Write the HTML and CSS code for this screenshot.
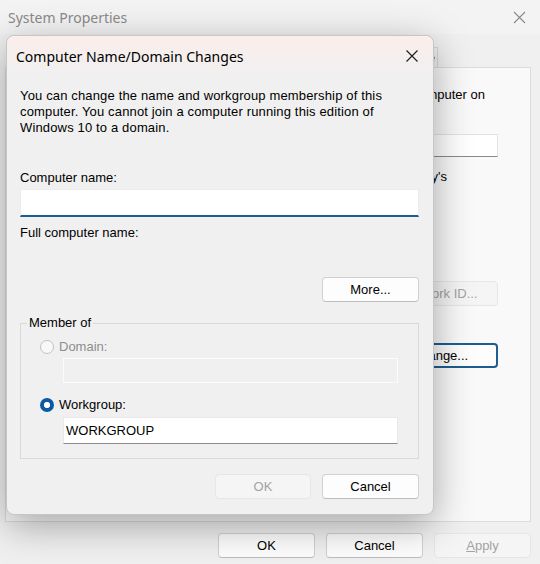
FILE: index.html
```html
<!DOCTYPE html>
<html lang="en">
<head>
    <meta charset="UTF-8">
    <title>System Properties</title>
    <link rel="stylesheet" href="styles.css">
</head>
<body>
    <div class="window">
        <div class="titlebar">
            <span class="title">System Properties</span>
            <svg class="close" width="13" height="13" viewBox="0 0 13 13"><path d="M1 1L12 12M12 1L1 12" stroke="#8a8a8a" stroke-width="1.1" fill="none"/></svg>
        </div>
        <div class="tabs">
            <div class="tab">Remote</div>
        </div>
        <div class="panel">
            <div class="bg-line right" style="margin-right: 13px;">computer on</div>
            <div class="bg-field"></div>
            <div class="bg-line right" style="margin-right: 51px; margin-top: 12px;">Mary's</div>
            <button class="btn wide disabled" style="margin-top: 96px;">Network ID...</button>
            <button class="btn wide focused" style="margin-top: 37px;">Change...</button>
        </div>
        <div class="footer">
            <button class="btn">OK</button>
            <button class="btn">Cancel</button>
            <button class="btn disabled"><u>A</u>pply</button>
        </div>
    </div>

    <div class="dialog">
        <div class="dialog-title">
            <span class="dialog-caption">Computer Name/Domain Changes</span>
            <svg width="12" height="12" viewBox="0 0 12 12"><path d="M0.5 0.5L11.5 11.5M11.5 0.5L0.5 11.5" stroke="#1a1a1a" stroke-width="1.1" fill="none"/></svg>
        </div>
        <div class="dialog-body">
            <p class="note">You can change the name and workgroup membership of this computer. You cannot join a computer running this edition of Windows 10 to a domain.</p>
            <div class="label first">Computer name:</div>
            <div class="field active"></div>
            <div class="label small-gap">Full computer name:</div>
            <button class="btn more">More...</button>

            <fieldset class="group">
                <legend>Member of</legend>
                <div class="radio-row disabled"><span class="radio"></span>Domain:</div>
                <div class="field sub disabled-field"></div>
                <div class="radio-row second"><span class="radio checked"></span>Workgroup:</div>
                <div class="field sub plain">WORKGROUP</div>
            </fieldset>

            <div class="actions">
                <button class="btn ok disabled">OK</button>
                <button class="btn">Cancel</button>
            </div>
        </div>
    </div>
</body>
</html>
```

FILE: styles.css
```css
body {
    margin: 0;
    font-family: "Liberation Sans", Arial, sans-serif;
    font-size: 13px;
    color: #000;
    background: #f0f0f0;
}
.window {
    width: 540px;
    height: 564px;
    background: #f0f0f0;
    display: flex;
    flex-direction: column;
    overflow: hidden;
}
.titlebar {
    height: 34px;
    display: flex;
    align-items: center;
    justify-content: space-between;
    padding: 0 14px 0 8px;
    background: #f3f3f3;
}
.title {
    font-family: "Noto Sans", sans-serif;
    font-size: 14px;
    color: #8a8a8a;
}
.tabs {
    display: flex;
    justify-content: flex-end;
    margin: 13px 102px 0 5px;
    height: 20px;
}
.tab {
    padding: 0 2px 0 6px;
    line-height: 19px;
    border: 1px solid #d9d9d9;
    border-bottom: none;
    background: #f0f0f0;
}
.panel {
    margin: 0 9px 0 5px;
    height: 455px;
    box-sizing: border-box;
    border: 1px solid #dcdcdc;
    background: #f9f9f9;
    padding: 19px 32px 0 16px;
    display: flex;
    flex-direction: column;
}
.bg-line {
    line-height: 16px;
    white-space: nowrap;
}
.bg-line.right {
    text-align: right;
}
.bg-field {
    margin: 31px 0 0 110px;
    height: 23px;
    box-sizing: border-box;
    background: #fff;
    border: 1px solid #e3e3e3;
    border-bottom-color: #8a8a8a;
}
.footer {
    display: flex;
    justify-content: flex-end;
    gap: 11px;
    padding: 11px 9px 0 0;
}
.btn {
    font-family: "Liberation Sans", Arial, sans-serif;
    font-size: 13px;
    color: #000;
    width: 97px;
    height: 25px;
    box-sizing: border-box;
    background: #fdfdfd;
    border: 1px solid #d0d0d0;
    border-bottom-color: #bdbdbd;
    border-radius: 4px;
    padding: 0;
}
.btn.wide {
    width: 116px;
    align-self: flex-end;
}
.btn.disabled {
    background: #f5f5f5;
    border-color: #e6e6e6;
    color: #a3a3a3;
}
.btn.focused {
    border: 2px solid #1d5d91;
}

.dialog {
    position: absolute;
    left: 6px;
    top: 35px;
    width: 428px;
    height: 480px;
    box-sizing: border-box;
    background: #f0f0f0;
    border: 1px solid #c6c6c6;
    border-radius: 8px;
    box-shadow: 0 10px 38px rgba(0, 0, 0, 0.34);
    display: flex;
    flex-direction: column;
}
.dialog-title {
    height: 40px;
    display: flex;
    align-items: center;
    justify-content: space-between;
    padding: 0 15px 0 9px;
    background: linear-gradient(#fbeeeb, #f0f0f0);
    border-radius: 8px 8px 0 0;
}
.dialog-caption {
    font-family: "Noto Sans", sans-serif;
    font-size: 14px;
    color: #000;
}
.dialog-body {
    flex: 1;
    display: flex;
    flex-direction: column;
    padding: 12px 14px 15px 13px;
}
.note {
    margin: 0;
    line-height: 16px;
    letter-spacing: 0.15px;
    padding-right: 15px;
}
.label {
    line-height: 16px;
}
.label.first {
    margin-top: 34px;
}
.label.small-gap {
    margin-top: 8px;
}
.field {
    height: 28px;
    box-sizing: border-box;
    margin-top: 3px;
    background: #fff;
    border: 1px solid #ececec;
}
.field.active {
    border-bottom: 2px solid #1b5e93;
}
.btn.more {
    margin-top: 36px;
    align-self: flex-end;
}
.group {
    margin: 13px 0 0;
    padding: 8px 20px 14px 6px;
    border: 1px solid #d9d9d9;
    min-width: 0;
}
.group legend {
    padding: 0 2px;
    line-height: 16px;
}
.radio-row {
    display: flex;
    align-items: center;
    gap: 5px;
    line-height: 16px;
    margin-left: 13px;
}
.radio-row.second {
    margin-top: 14px;
}
.radio-row.disabled {
    color: #8d8d8d;
}
.radio {
    width: 14px;
    height: 14px;
    box-sizing: border-box;
    border-radius: 50%;
    border: 1px solid #c2c2c2;
    background: #f8f8f8;
}
.radio.checked {
    border: none;
    background: radial-gradient(circle, #fff 0 2.8px, #0c5aa6 3.4px);
}
.field.sub {
    margin: 3px 0 0 36px;
    height: 25px;
}
.field.disabled-field {
    background: #f0f0f0;
    border-color: #fbfbfb;
}
.field.plain {
    margin-top: 4px;
    height: 27px;
    border-color: #e8e8e8;
    border-bottom-color: #8c8c8c;
    padding-left: 2px;
    line-height: 25px;
}
.actions {
    margin-top: auto;
    display: flex;
    justify-content: flex-end;
    gap: 11px;
}
.btn.ok {
    width: 96px;
}
```
